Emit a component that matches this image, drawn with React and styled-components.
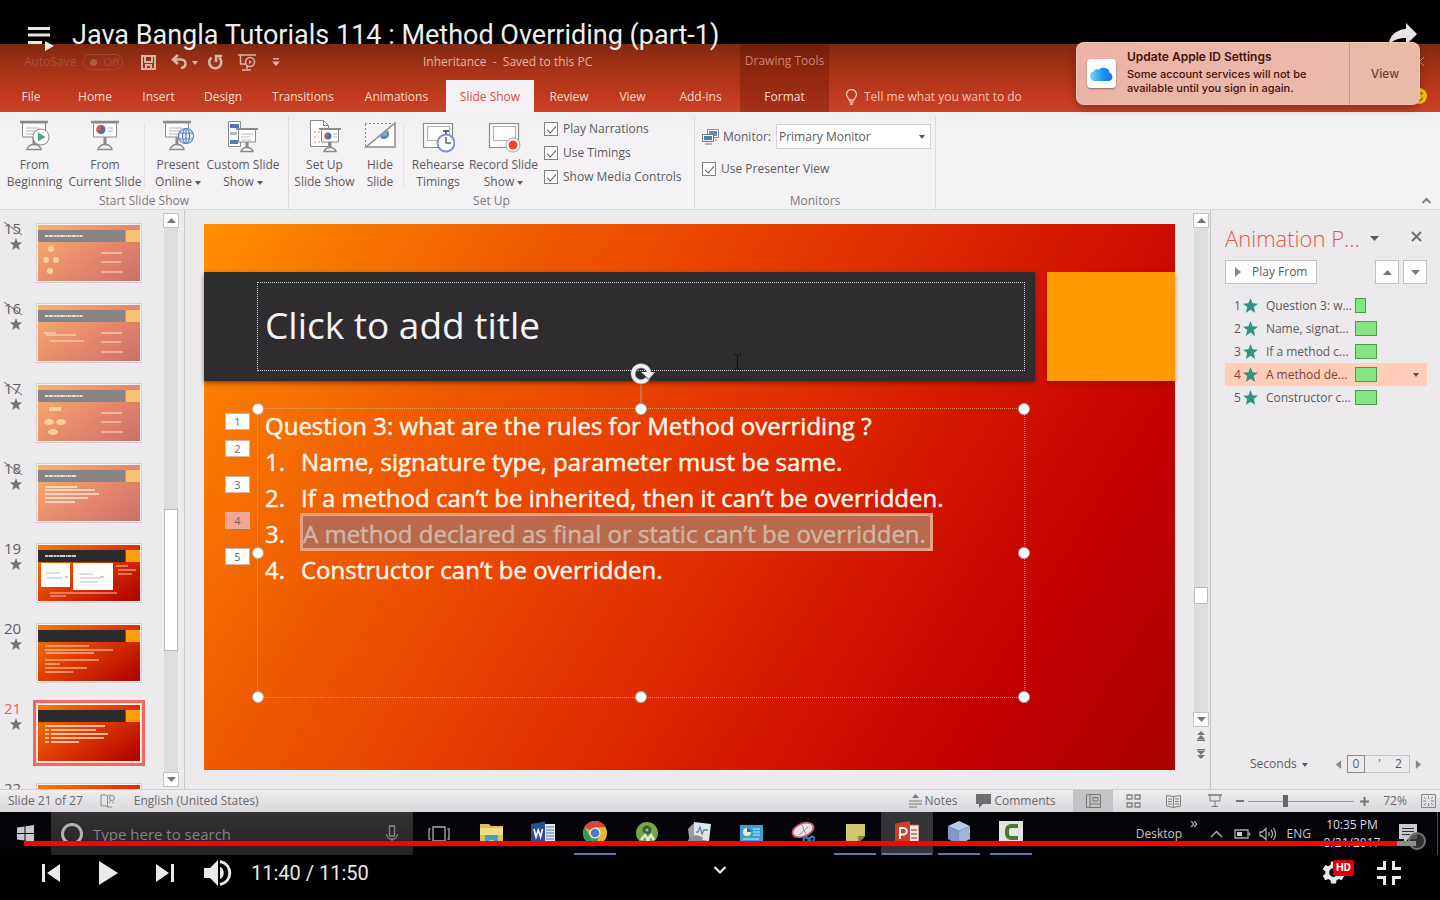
import React from "react";
import styled, { createGlobalStyle, css } from "styled-components";

const Global = createGlobalStyle`
  * { box-sizing: border-box; }
  html, body { margin: 0; background: #000; }
  button, input, select { font: inherit; color: inherit; margin: 0; }
  button { background: none; border: 0; padding: 0; cursor: pointer; }
  svg { display: block; flex: none; }
`;

const ui = `"Open Sans", "Noto Sans", sans-serif`;

/* ---------- player shell ---------- */
const Player = styled.div`
  position: relative;
  min-height: 100vh;
  display: flex;
  flex-direction: column;
  overflow: hidden;
  padding-top: 44px;
  background: #000;
  font-family: Roboto, sans-serif;
`;
const PlayerHeader = styled.header`
  position: absolute;
  z-index: 3;
  top: 0;
  left: 0;
  right: 0;
  height: 70px;
  padding: 0 22px 0 26px;
  display: flex;
  align-items: center;
  color: #eee;
`;
const VideoTitle = styled.h1`
  flex: 1;
  margin: 0 0 0 16px;
  font-size: 27px;
  line-height: 32px;
  font-weight: 400;
  white-space: nowrap;
`;
const Video = styled.main`
  flex: 1;
  display: flex;
  flex-direction: column;
  min-height: 0;
  font-family: ${ui};
  font-size: 12px;
  line-height: 16px;
  color: #5c5a5c;
`;
const SeekBar = styled.input`
  position: absolute;
  z-index: 4;
  left: 24px;
  right: 24px;
  bottom: 54px;
  width: calc(100% - 48px);
  height: 5px;
  appearance: none;
  background: linear-gradient(to right, #f00 98.6%, #8d8d8d 98.6%);
  &::-webkit-slider-thumb { appearance: none; width: 1px; height: 5px; background: transparent; }
`;
const Controls = styled.footer`
  display: grid;
  grid-template-columns: 1fr auto 1fr;
  align-items: center;
  height: 45px;
  padding: 0 38px 10px 38px;
  color: #eaeaea;
`;
const ControlSide = styled.div`
  display: flex;
  align-items: center;
  gap: ${(p) => p.$gap}px;
  justify-content: ${(p) => (p.$end ? "flex-end" : "flex-start")};
`;
const VolumeGroup = styled.div`
  display: flex;
  align-items: center;
  gap: 19px;
  margin-left: -8px;
`;
const Time = styled.span`
  font-size: 20px;
  line-height: 24px;
`;
const Settings = styled.button`
  position: relative;
`;
const HdBadge = styled.span`
  position: absolute;
  top: 0;
  left: 12px;
  padding: 0 3px;
  border-radius: 2px;
  background: #e00000;
  color: #fff;
  font-weight: 700;
  font-size: 11px;
  line-height: 16px;
`;

/* ---------- notification ---------- */
const Toast = styled.aside`
  position: absolute;
  z-index: 5;
  top: 42px;
  right: 20px;
  width: 344px;
  height: 63px;
  display: flex;
  align-items: stretch;
  border-radius: 8px;
  background: linear-gradient(100deg, #ebb3a6, #eab9aa 70%, #e8bba6);
  box-shadow: 0 3px 10px rgba(0, 0, 0, 0.3), inset 0 0 0 1px rgba(255, 255, 255, 0.2);
  color: #431109;
  font: 500 11px/14px Inter, sans-serif;
`;
const ToastIcon = styled.div`
  align-self: center;
  margin: 0 11px;
  width: 29px;
  height: 29px;
  border-radius: 4px;
  background: #fff;
  display: grid;
  place-items: center;
  box-shadow: 0 1px 2px rgba(0, 0, 0, 0.4);
`;
const ToastText = styled.div`
  flex: 1;
  padding-top: 7px;
  white-space: nowrap;
`;
const ToastTitle = styled.div`
  font-weight: 600;
  font-size: 12px;
  line-height: 16px;
  margin-bottom: 2px;
`;
const ToastAction = styled.button`
  width: 71px;
  border-left: 1px solid #cf958a;
  color: #74402f;
  font-size: 12px;
`;

/* ---------- window header ---------- */
const WindowHeader = styled.div`
  background: linear-gradient(#7f2812, #a93317 40%, #c03a1d 75%, #cb4326);
  color: #f6dcd2;
  white-space: nowrap;
`;
const TitleBar = styled.div`
  display: flex;
  height: 36px;
  align-items: center;
`;
const QuickAccess = styled.div`
  width: 423px;
  padding-left: 24px;
  display: flex;
  align-items: center;
  color: #d9b5a8;
`;
const QuickButton = styled.button`
  margin-right: ${(p) => p.$after || 0}px;
`;
const AutoSave = styled.span`
  width: 116px;
  display: flex;
  align-items: center;
  gap: 7px;
  color: #a55440;
`;
const Toggle = styled.span`
  display: flex;
  align-items: center;
  gap: 6px;
  height: 16px;
  width: 40px;
  padding-left: 6px;
  border: 1px solid #a04a35;
  border-radius: 8px;
  font-size: 11px;
  line-height: 14px;
  &::before { content: ""; width: 7px; height: 7px; border-radius: 50%; background: #ad5c49; }
`;
const DocTitle = styled.span`
  width: 317px;
  color: #e2b5a6;
  white-space: pre;
`;
const ToolContext = styled.span`
  width: 89px;
  height: 36px;
  line-height: 34px;
  text-align: center;
  background: rgba(80, 10, 0, 0.3);
  color: #c98571;
`;
const Tabs = styled.nav`
  display: flex;
  height: 32px;
  padding-left: 2px;
`;
const Tab = styled.button`
  width: ${(p) => p.$w}px;
  line-height: 34px;
  text-align: center;
  ${(p) => p.$active && css`background: #f3f1f3; color: #dd4f47;`}
  ${(p) => p.$context && css`background: rgba(80, 10, 0, 0.3);`}
`;
const TellMe = styled.button`
  display: flex;
  align-items: center;
  gap: 6px;
  margin-left: 16px;
  padding-top: 2px;
  color: #efc3b3;
`;
const HeaderEnd = styled.div`
  margin-left: auto;
  padding-right: 13px;
  display: flex;
  align-items: center;
`;

/* ---------- ribbon ---------- */
const Ribbon = styled.section`
  display: flex;
  height: 98px;
  padding: 5px 0 0;
  background: linear-gradient(#efeef1, #f4f2f4 30%);
  border-bottom: 1px solid #d9d7d9;
`;
const Group = styled.div`
  display: flex;
  flex-direction: column;
  justify-content: space-between;
  width: ${(p) => p.$w}px;
  border-right: 1px solid #dad8da;
`;
const GroupBody = styled.div`
  display: flex;
`;
const GroupLabel = styled.div`
  text-align: center;
  color: #7b797b;
`;
const BigButton = styled.button`
  display: flex;
  flex-direction: column;
  align-items: center;
  width: ${(p) => p.$w}px;
  padding-top: 3px;
  line-height: 17px;
  white-space: nowrap;
  & > svg { margin-bottom: 2px; }
`;
const Rule = styled.i`
  width: 1px;
  height: 66px;
  margin: 6px 3px 0;
  background: #e3e1e3;
`;
const Caret = styled.i`
  display: inline-block;
  vertical-align: middle;
  margin-left: ${(p) => p.$gap ?? 3}px;
  border: 3px solid transparent;
  border-top: 4px solid currentColor;
  border-bottom: 0;
`;
const Checks = styled.div`
  display: flex;
  flex-direction: column;
  gap: 8px;
  margin-left: 6px;
  padding-top: 4px;
`;
const CheckLabel = styled.label`
  display: flex;
  align-items: center;
  gap: 5px;
  white-space: nowrap;
`;
const CheckBox = styled.input`
  appearance: none;
  width: 14px;
  height: 14px;
  border: 1px solid #858385;
  background: #fbfafb;
  display: grid;
  place-items: center;
  &:checked::after {
    content: "";
    width: 4px;
    height: 8px;
    margin-bottom: 2px;
    border: solid #5d5b5d;
    border-width: 0 1px 1px 0;
    transform: rotate(40deg);
  }
`;
const MonitorBox = styled.div`
  display: flex;
  flex-direction: column;
  gap: 12px;
  padding: 7px 0 0 7px;
`;
const MonitorRow = styled.label`
  display: flex;
  align-items: center;
  gap: 4px;
`;
const SelectWrap = styled.span`
  display: flex;
  align-items: center;
  width: 155px;
  height: 25px;
  margin-left: 1px;
  padding-right: 5px;
  background: #fff;
  border: 1px solid #d2d0d2;
`;
const Select = styled.select`
  appearance: none;
  flex: 1;
  border: 0;
  padding: 0 2px;
  background: none;
`;
const CollapseRibbon = styled.button`
  align-self: flex-end;
  margin: 0 8px 2px auto;
`;

/* ---------- workspace ---------- */
const Workspace = styled.section`
  flex: 1 1 0;
  min-height: 560px;
  display: flex;
  background: #eceaec;
  border-bottom: 1px solid #cfcdcf;
`;
const Panel = styled.aside`
  position: relative;
  width: 185px;
  display: flex;
  justify-content: space-between;
  padding-right: 4px;
  border-right: 1px solid #c9c7c9;
  overflow: hidden;
`;
const ThumbList = styled.ol`
  list-style: none;
  margin: 0;
  padding: 13px 0 0;
  height: 0;
`;
const ThumbItem = styled.li`
  display: flex;
  height: 80px;
  padding-left: 4px;
  color: ${(p) => (p.$active ? "#e0655c" : "#605e60")};
`;
const ThumbMeta = styled.div`
  position: relative;
  width: 32px;
  font-size: 15px;
  line-height: 10px;
  ${(p) => p.$off && css`
    &::after {
      content: "";
      position: absolute;
      left: -2px;
      top: 5px;
      width: 22px;
      height: 1px;
      background: #777;
      transform: rotate(36deg);
    }
  `}
  & > svg { margin: 5px 0 0 6px; }
`;
const ThumbFrame = styled.div`
  height: 60px;
  border: 1px solid #d3d0d3;
  padding: 1px;
  background: #f8f3f1;
  ${(p) => p.$active && css`outline: 3px solid #f0695f; border-color: #f7ddd0;`}
`;
const Scroll = styled.div`
  display: flex;
  flex-direction: column;
  align-items: center;
  width: 18px;
  padding: 3px 0 ${(p) => p.$bottom || 0}px;
  color: #777;
`;
const ScrollTrack = styled.div`
  flex: 1;
  width: 14px;
  display: flex;
  flex-direction: column;
  background: #dedddd;
`;
const ScrollThumb = styled.div`
  height: ${(p) => p.$h}px;
  margin-top: ${(p) => p.$top}px;
  background: #fff;
  border: 1px solid #bbb9bb;
`;
const ArrowButton = styled.button`
  width: ${(p) => p.$size || 16}px;
  height: ${(p) => p.$size || 15}px;
  flex: none;
  display: grid;
  place-items: center;
  background: #fff;
  border: 1px solid #c3c1c3;
  color: #777;
`;
const JumpButton = styled.button`
  height: 18px;
`;
const Stage = styled.div`
  flex: 1;
  min-width: 0;
  display: flex;
  align-items: flex-start;
  padding: 14px 17px 0 19px;
`;

/* ---------- slide ---------- */
const Slide = styled.article`
  flex: 1;
  height: 546px;
  padding-top: 48px;
  background: linear-gradient(122deg, #ff8f00 0%, #f67200 14%, #ee5700 28%, #e63c00 45%, #da2300 60%, #cc0c00 74%, #c00000 85%, #a80000 100%);
  color: #fff4ea;
`;
const TitleBand = styled.div`
  display: flex;
  gap: 12px;
  height: 109px;
`;
const TitleBlock = styled.div`
  flex: 1;
  display: flex;
  padding: 10px 10px 10px 53px;
  background: #2f2c30;
  box-shadow: 0 2px 4px rgba(60, 0, 0, 0.5);
`;
const Accent = styled.div`
  width: 128px;
  background: #ff9b00;
  box-shadow: 0 2px 4px rgba(90, 20, 0, 0.5);
`;
const TitlePlaceholder = styled.h2`
  flex: 1;
  margin: 0;
  padding: 0 7px 4px;
  display: flex;
  align-items: center;
  border: 1px dotted #d5d3d5;
  font-weight: 400;
  font-size: 37px;
  line-height: 44px;
  color: #f5f3f4;
  white-space: nowrap;
`;
const Body = styled.div`
  position: relative;
  height: 290px;
  margin: 27px 150px 0 53px;
  border: 1px dotted rgba(235, 185, 130, 0.7);
  font-size: 24px;
  line-height: 34px;
  white-space: nowrap;
  -webkit-text-stroke: 0.5px currentColor;
`;
const Line = styled.div`
  position: relative;
  display: flex;
  height: 36px;
  padding-left: 7px;
`;
const Num = styled.span`
  width: 36px;
`;
const Chosen = styled.span`
  height: 38px;
  width: 633px;
  margin: -4px 0 0 -1px;
  border: 3px solid #e9a08a;
  background: #b96a4b;
  color: #cdb5a8;
  line-height: 36px;
`;
const Tag = styled.span`
  position: absolute;
  left: -33px;
  top: ${(p) => p.$top}px;
  width: 25px;
  height: 17px;
  border: 1px solid #d8b2a2;
  background: ${(p) => (p.$on ? "#f8a393" : "#fff")};
  color: #666;
  font-size: 11px;
  line-height: 15px;
  text-align: center;
  -webkit-text-stroke: 0;
`;
const Handle = styled.i`
  position: absolute;
  left: ${(p) => p.$x}%;
  top: ${(p) => p.$y}%;
  width: 12px;
  height: 12px;
  margin: -6px;
  border-radius: 50%;
  background: #fff;
  border: 1px solid #aaa;
`;
const Rotate = styled.div`
  position: absolute;
  left: 50%;
  top: -46px;
  margin-left: -12px;
`;
const TextCursor = styled.div`
  position: absolute;
  left: 62%;
  top: -56px;
`;

/* ---------- animation pane ---------- */
const Pane = styled.aside`
  width: 230px;
  display: flex;
  flex-direction: column;
  padding: 12px 13px 16px 14px;
  border-left: 1px solid #c6c4c6;
`;
const PaneHead = styled.div`
  display: flex;
  align-items: center;
  gap: 10px;
  height: 32px;
  & > button:last-child { margin-left: auto; }
`;
const PaneTitle = styled.h2`
  margin: 0;
  font-weight: 300;
  font-size: 22px;
  line-height: 32px;
  color: #e2574e;
  white-space: nowrap;
`;
const PaneTools = styled.div`
  display: flex;
  gap: 4px;
  margin: 6px 0 10px;
`;
const PlayFrom = styled.button`
  display: flex;
  align-items: center;
  gap: 10px;
  width: 92px;
  height: 24px;
  margin-right: auto;
  padding-left: 8px;
  background: #fff;
  border: 1px solid #c3c1c3;
`;
const Effects = styled.ol`
  list-style: none;
  margin: 0;
  padding: 0;
`;
const Effect = styled.li`
  display: flex;
  align-items: center;
  height: 23px;
  padding: 0 8px 0 9px;
  ${(p) => p.$on && css`background: #ffcdb8; color: #7a4138;`}
  & > svg { margin: 0 8px 0 2px; }
  & > i { margin-left: auto; }
`;
const EffectName = styled.span`
  width: 89px;
  white-space: nowrap;
`;
const Duration = styled.span`
  width: ${(p) => p.$w}px;
  height: 15px;
  background: #86e486;
  border: 1px solid #4f9a4c;
`;
const Timeline = styled.div`
  display: flex;
  align-items: center;
  justify-content: space-between;
  margin-top: auto;
  padding: 0 5px 0 25px;
`;
const Range = styled.div`
  display: flex;
  align-items: center;
  gap: 5px;
`;
const Scale = styled.div`
  display: flex;
  width: 63px;
  height: 18px;
  border: 1px solid #c5c3c5;
  line-height: 16px;
  justify-content: space-between;
  padding-right: 7px;
`;
const ScaleNow = styled.span`
  width: 18px;
  height: 18px;
  margin: -1px;
  border: 1px solid #8f8d8f;
  text-align: center;
`;

/* ---------- status bar ---------- */
const StatusBar = styled.footer`
  position: relative;
  display: flex;
  align-items: center;
  height: 22px;
  padding: 0 4px 0 8px;
  background: linear-gradient(#efedef, #d9d7d9);
  white-space: nowrap;
  color: #6a686a;
`;
const StatusButton = styled.button`
  display: flex;
  align-items: center;
  justify-content: center;
  gap: 3px;
  height: 22px;
  width: ${(p) => p.$w}px;
  background: ${(p) => (p.$on ? "#c4c2c4" : "none")};
`;
const StatusEnd = styled.div`
  margin-left: auto;
  display: flex;
  align-items: center;
`;
const ZoomRange = styled.input`
  appearance: none;
  width: 106px;
  height: 14px;
  margin: 0 6px 0 4px;
  background: linear-gradient(#9a989a, #9a989a) center / 100% 1px no-repeat;
  &::-webkit-slider-thumb { appearance: none; width: 5px; height: 12px; background: #666; }
`;

/* ---------- task bar ---------- */
const TaskBar = styled.footer`
  display: flex;
  height: 43px;
  background: #040308;
  color: #c6c5c8;
  white-space: nowrap;
`;
const Start = styled.button`
  width: 51px;
  display: grid;
  place-items: center;
`;
const Search = styled.label`
  display: flex;
  align-items: center;
  gap: 9px;
  width: 362px;
  padding: 0 14px 0 9px;
  background: linear-gradient(#333133, #252425);
`;
const SearchInput = styled.input`
  flex: 1;
  min-width: 0;
  padding: 0;
  border: 0;
  background: none;
  font-size: 15px;
  line-height: 20px;
  &::placeholder { color: #858385; opacity: 1; }
`;
const Task = styled.button`
  width: 52px;
  display: grid;
  place-items: center;
  background: ${(p) => (p.$on ? "#343438" : "none")};
  border-bottom: 2px solid transparent;
  ${(p) => p.$open && css`
    background-image: linear-gradient(#4e80a8, #4e80a8);
    background-size: ${p.$on ? 50 : 42}px 2px;
    background-position: center bottom;
    background-origin: border-box;
    background-clip: border-box;
    background-repeat: no-repeat;
  `}
`;
const Tray = styled.div`
  margin-left: auto;
  display: flex;
  align-items: center;
  padding-right: 2px;
`;
const TrayText = styled.span`
  margin-right: ${(p) => p.$after}px;
`;
const Chevrons = styled.span`
  align-self: flex-start;
  font-size: 15px;
  line-height: 20px;
  margin-right: 12px;
`;
const TrayIcon = styled.span`
  margin-right: ${(p) => p.$after}px;
`;
const Clock = styled.time`
  width: 66px;
  text-align: center;
  line-height: 18px;
  color: #dddce0;
`;
const Notices = styled.span`
  position: relative;
  margin: 0 20px 0 14px;
`;
const NoticeCount = styled.i`
  position: absolute;
  top: 8px;
  left: 9px;
  width: 18px;
  height: 18px;
  border-radius: 50%;
  border: 2px solid #727272;
  background: rgba(60, 60, 60, 0.8);
`;
const ShowDesktop = styled.i`
  align-self: stretch;
  width: 1px;
  background: #4a4a4d;
`;

/* ---------- drawings ---------- */
const Star = ({ c = "#2f9484", s = 15 }) => (
  <svg width={s} height={s} viewBox="0 0 16 16"><path fill={c} d="M8 0l2.200 5.600 5.800.4-4.500 3.700L13 16l-5-3.400L3 16l1.500-6.300L0 6l5.800-.4z" /></svg>
);
const Up = () => <svg width="9" height="5" viewBox="0 0 9 5"><path fill="currentColor" d="M4.500 0L9 5H0z" /></svg>;
const Down = () => <svg width="9" height="5" viewBox="0 0 9 5"><path fill="currentColor" d="M0 0h9L4.500 5z" /></svg>;
const Tri = ({ left, s = 8 }) => (
  <svg width={s} height={s + 2} viewBox="0 0 8 10"><path fill="#8a888a" d={left ? "M7 0v10L1 5z" : "M1 0l6 5-6 5z"} /></svg>
);

const Screen = ({ x = 0, y = 0, w = 28, pie }) => (
  <g transform={`translate(${x} ${y})`} fill="none" stroke="#8b898b">
    <path strokeWidth="2.500" d={`M0 2h${w}`} />
    <path fill="#fdfdfd" d={`M2.500 3h${w - 5}v14h-${w - 5}z`} />
    {pie ? (
      <g stroke="none"><circle cx="10" cy="9.500" r="4.500" fill="#3f72bd" /><path fill="#dd5a35" d="M10 9.500V5a4.500 4.500 0 0 0-3 8z" /></g>
    ) : <path stroke="#b5b3b5" d={`M6 8h${w - 15}M6 11h${w - 16}M6 14h${w - 18}`} />}
    {pie && <path stroke="#b5b3b5" d="M17 8h5M17 11h5" />}
    <path strokeWidth="3" d={`M${w / 2} 17v8`} />
    <path strokeWidth="1.500" d={`M${w / 2 - 7} 29.500c1-4 4-5 7-5s6 1 7 5z`} fill="#f4f4f4" />
  </g>
);
const Icon = ({ children }) => <svg width="34" height="34" viewBox="0 0 34 34">{children}</svg>;
const IconBeginning = () => (
  <Icon><Screen x={2} y={0} /><circle cx="23" cy="17" r="8" fill="#fff" stroke="#8b898b" /><path d="M20 12.500l7.500 4.500-7.500 4.500z" fill="#55a08a" /></Icon>
);
const IconCurrent = () => <Icon><Screen x={3} y={0} pie /></Icon>;
const IconOnline = () => (
  <Icon><Screen x={2} y={0} /><g fill="#eef4fb" stroke="#5b84c4" strokeWidth="1.200"><circle cx="25" cy="16" r="7.500" /><ellipse cx="25" cy="16" rx="3.500" ry="7.500" fill="none" /><path d="M18 13h14M18 19h14M25 8.500v15" /></g></Icon>
);
const IconCustom = () => (
  <Icon><path fill="#fff" stroke="#8b898b" d="M2.500 1.500h12v25h-12z" /><path fill="#4b74bd" d="M4 4h9v4H4z" /><path fill="#a7bdb4" d="M4 12h7v3H4z" /><path fill="#5180b8" d="M4 20h8v4H4z" />
    <g fill="none" stroke="#8b898b"><path strokeWidth="2" d="M10 9h22" /><path fill="#fff" d="M12.500 10v12h17V10" /><path stroke="#bbb" d="M15 14h12M15 17h9M15 20h10" /><path strokeWidth="3" d="M21 22v6" /><path fill="#f4f4f4" strokeWidth="1.500" d="M15 31.500c1-3 3-4 6-4s5 1 6 4z" /></g></Icon>
);
const IconSetup = () => (
  <Icon><path fill="#fff" stroke="#8b898b" d="M2.500.5h13l5 5v21h-18z" /><path fill="none" stroke="#8b898b" d="M15.500.5v5h5" /><path stroke="#c98d80" strokeDasharray="2 2" d="M6 12h7M6 17h5M6 22h6" />
    <g fill="none" stroke="#8b898b"><path strokeWidth="2" d="M11 9h22" /><path fill="#fff" d="M13.500 10v12h17V10" /><path strokeWidth="3" d="M22 22v6" /><path fill="#f4f4f4" strokeWidth="1.500" d="M16 31.500c1-3 3-4 6-4s5 1 6 4z" /></g>
    <circle cx="20" cy="16" r="3.500" fill="#3f72bd" /><path fill="#dd5a35" d="M20 16v-3.500a3.500 3.500 0 0 0-2.500 6z" /><path stroke="#bbb" d="M25 14h4M25 17h4" /></Icon>
);
const IconHide = () => (
  <Icon><path fill="none" stroke="#8b898b" strokeDasharray="2 2" d="M2 3.500h26M2.500 4v22" /><path fill="#fdfdfd" stroke="#8b898b" strokeWidth="1.500" d="M32 3v24H3z" /><path fill="#4b7fc2" d="M24 10a5 5 0 1 1-7 7z" /><path fill="#9ab" d="M24 10v5l-5 2z" /></Icon>
);
const Slideshow = () => (
  <g fill="#fdfdfd" stroke="#8b898b" strokeWidth="1.200"><path d="M2.500 3.500h29v24h-29z" /><path stroke="#b3b1b3" d="M6.500 6.500h22v14h-22z" /></g>
);
const IconRehearse = () => (
  <Icon><Slideshow /><path fill="#666" d="M22 10h6v2h-2v2h-2v-2h-2z" /><circle cx="25" cy="23" r="8.500" fill="#fff" stroke="#7590c8" strokeWidth="1.800" /><path fill="none" stroke="#666" strokeWidth="1.500" d="M25 17v6h5" /></Icon>
);
const IconRecord = () => <Icon><Slideshow /><circle cx="26" cy="25" r="7" fill="#f8f6f7" stroke="#aaa" /><circle cx="26" cy="25" r="4.500" fill="#e24b38" /></Icon>;

const FilmThumb = ({ kind, muted, id }) => (
  <svg width="102" height="56" viewBox="0 0 102 56" opacity={muted ? 0.55 : 1}>
    <defs>
      <linearGradient id={`g${id}`} x1="0" y1="0.1" x2="1" y2="0.9">
        <stop offset="0" stopColor="#f57800" /><stop offset=".45" stopColor="#e03c00" /><stop offset="1" stopColor="#b00500" />
      </linearGradient>
    </defs>
    <path fill={`url(#g${id})`} d="M0 0h102v56H0z" />
    <path fill="#2c2b2f" d="M0 5h87v12H0z" /><path fill="#ff9d0a" d="M88 5h14v12H88z" />
    {kind !== "text" && kind !== "rules" && <path stroke="#fff" strokeWidth="1.600" strokeDasharray="3 .5 5 .6 2 .4" d={kind === "pics" || kind === "list" ? "M7 11h31" : "M7 11h38"} />}
    {(kind === "tree" || kind === "plain" || kind === "tree2") && (
      <g stroke="#ffd8b0" strokeWidth="1"><path d="M63 28h21M63 37h20M63 47h22" /></g>
    )}
    {kind === "tree" && <g fill="#ffb84a"><circle cx="13" cy="24" r="3" /><circle cx="8" cy="35" r="3" /><circle cx="18" cy="35" r="3" /><circle cx="12" cy="46" r="3" /></g>}
    {kind === "tree2" && <g fill="#ffb84a"><path d="M11 22h12v4H11z" /><ellipse cx="11" cy="37" rx="5" ry="3" /><ellipse cx="23" cy="37" rx="5" ry="3" /><ellipse cx="15" cy="47" rx="5" ry="3" /></g>}
    {kind === "plain" && <path stroke="#ffd8b0" d="M6 28h12M8 30h30M12 36h34" />}
    {kind === "list" && <path stroke="#ffe6d0" strokeWidth="1.500" d="M7 22h32M7 25h50M7 29h54M7 33h43M7 37h30" />}
    {kind === "pics" && <g><path fill="#fff" d="M3 18h29v24H3zM35 18h40v27H35z" /><path stroke="#b9b9c4" d="M8 28h14M9 33h16M41 29h14M42 33h20M42 37h18" /><path stroke="#dcb" strokeWidth="2" d="M27 32h3M62 32h4" /><path stroke="#ffc6b0" d="M78 21h12M80 25h18M80 29h14M12 48h67M12 51h16" /></g>}
    {kind === "text" && <path stroke="#ffe6d0" strokeWidth="1.200" d="M7 21h44M7 25h68M8 28h48M7 35h54M7 39h15M7 43h42M7 47h28" />}
    {kind === "rules" && <path stroke="#ffe6d0" strokeWidth="1.300" d="M7 21h60M7 25h4M13 25h45M7 29h4M13 29h57M7 33h4M13 33h53M7 37h4M13 37h28" />}
  </svg>
);

const thumbs = [
  { n: 15, kind: "tree", off: true }, { n: 16, kind: "plain", off: true }, { n: 17, kind: "tree2", off: true },
  { n: 18, kind: "list", off: true }, { n: 19, kind: "pics" }, { n: 20, kind: "text" },
  { n: 21, kind: "rules", active: true }, { n: 22, kind: "text" },
];
const tabs = [["File", 58], ["Home", 70], ["Insert", 57], ["Design", 72], ["Transitions", 88], ["Animations", 99], ["Slide Show", 88], ["Review", 70], ["View", 57], ["Add-ins", 79], ["Format", 89]];
const rules = [
  { n: "1.", t: "Name, signature type, parameter must be same." },
  { n: "2.", t: "If a method can’t be inherited, then it can’t be overridden." },
  { n: "3.", t: "A method declared as final or static can’t be overridden.", on: true },
  { n: "4.", t: "Constructor can’t be overridden." },
];
const effects = [["Question 3: w...", 11], ["Name, signat...", 22], ["If a method c...", 22], ["A method de...", 22], ["Constructor c...", 22]];

const taskIcons = [
  { name: "Task View", d: <g fill="none" stroke="#aaa" strokeWidth="1.300"><path d="M6 6h12v14H6zM3.500 8H2v10h1.500M20.500 8H22v10h-1.500" /></g> },
  { name: "File Explorer", d: <g><path fill="#dcc05c" d="M1 3h9l2 2h12v18H1z" /><path fill="#f2dc85" d="M1 7h23v7H1z" /><path fill="#3aa5c8" d="M6 14h13v9h-4v-4h-5v4H6z" /></g> },
  { name: "Word", d: <g><path fill="#dfe5f2" d="M12 3h12v18H12z" /><path stroke="#5872ab" d="M15 6h8M15 9h8M15 12h8M15 15h8M15 18h8" /><path fill="#2c4d93" d="M0 3l14-2.500v23L0 21z" /><path fill="none" stroke="#fff" strokeWidth="1.600" d="M3 8l2 8 2.200-7 2.300 7 2-8" /></g> },
  { name: "Chrome", open: true, d: <g><circle cx="12" cy="12" r="12" fill="#e8b931" /><path fill="#d8453a" d="M12 12L1.500 6.200A12 12 0 0 1 22.500 6.200H12z" /><path fill="#2f9a55" d="M1.500 6.200L7 15l5 9A12 12 0 0 1 1.500 6.200z" /><path fill="#2f9a55" d="M7 14l5 10 4-8z" /><circle cx="12" cy="12" r="5.600" fill="#eee" /><circle cx="12" cy="12" r="4.300" fill="#4a79d8" /></g> },
  { name: "Android Studio", d: <g><circle cx="12" cy="12" r="11" fill="#76a845" /><circle cx="12" cy="9" r="4.500" fill="#40603c" /><circle cx="12" cy="9" r="1.500" fill="#9fc47e" /><path fill="none" stroke="#dfe8d8" strokeWidth="2.500" d="M6 19l4-5 4 6M12 20l4-6 3 5" /></g> },
  { name: "Performance", d: <g><path fill="#9a9fa3" d="M1 8l6-6 4 16-8 6z" /><path fill="#dfe4e8" d="M7 1l17 2-2 17-15-1z" /><path fill="#8a9095" d="M1 19c5-6 10-6 15-2l-3 5H1z" /><path fill="none" stroke="#5f87a8" strokeWidth="1.300" d="M9 11h2l2-5 2 7 2-4h4" /></g> },
  { name: "Control Panel", d: <g><path fill="#37a0d4" d="M1 4h23v17H1z" /><circle cx="8" cy="11" r="4" fill="#f0e9c8" /><path fill="#1f6fae" d="M8 11V7a4 4 0 0 1 4 4z" /><path stroke="#d5edfa" d="M14 8h7M14 11h7M14 14h7M4 18h16" /></g> },
  { name: "Snipping Tool", d: <g><ellipse cx="12" cy="9" rx="11" ry="6.500" fill="#e8e4e8" stroke="#d44f68" strokeWidth="1.800" transform="rotate(-22 12 9)" /><path stroke="#7a9a9a" d="M11 4l5 12M17 6L8 14" /><circle cx="15" cy="19" r="2.500" fill="none" stroke="#267fb0" strokeWidth="2" /><circle cx="21" cy="18" r="2.500" fill="none" stroke="#267fb0" strokeWidth="2" /></g> },
  { name: "Sticky Notes", open: true, d: <g><path fill="#cfc66d" d="M3 3h19v12l-7 7H3z" /><path fill="#8a8148" d="M15 15h7l-7 7z" /></g> },
  { name: "PowerPoint", open: true, on: true, d: <g><path fill="#eee" stroke="#c9533b" d="M12 4h12v17H12z" /><path stroke="#cf5a42" strokeWidth="1.500" d="M16 9h6M16 13h6M16 17h6" /><path fill="#cf3d26" d="M0 2.500L15 0v24L0 21z" /><path fill="none" stroke="#fff" strokeWidth="2" d="M5 18V7h3.500a3 3 0 0 1 0 6.500H5" /></g> },
  { name: "VirtualBox", open: true, d: <g><path fill="#b9cbe6" d="M12 0l11 5-11 5L1 5z" /><path fill="#8199c4" d="M1 5l11 5v14L1 18z" /><path fill="#a0b4d8" d="M23 5l-11 5v14l11-6z" /></g> },
  { name: "Camtasia", open: true, d: <g><path fill="#e3e4e0" d="M-1-1h26v26H-1z" /><path fill="none" stroke="#4a7a34" strokeWidth="4" d="M19 5H12a4 4 0 0 0-4 4v4a4 4 0 0 0 4 4h7" /></g> },
];

export default function App() {
  return (
    <Player>
      <Global />
      <PlayerHeader>
        <button aria-label="Playlist">
          <svg width="30" height="34" viewBox="0 0 30 34" fill="#e6e6e6"><path d="M2 9h22v3H2zM2 15.500h22v3H2zM2 23h14v3H2zM19 23l9 5-9 5z" /></svg>
        </button>
        <VideoTitle>Java Bangla Tutorials 114 : Method Overriding (part-1)</VideoTitle>
        <button aria-label="Share">
          <svg width="30" height="26" viewBox="0 0 30 26"><path fill="#e8e8e8" d="M18 1l11 11-11 11v-7C10 16 4 18 0 25 1 14 7 8 18 7z" /></svg>
        </button>
      </PlayerHeader>

      <Video>
        <WindowHeader>
          <TitleBar>
            <QuickAccess>
              <AutoSave>AutoSave <Toggle>Off</Toggle></AutoSave>
              <QuickButton $after={14} aria-label="Save">
                <svg width="17" height="17" viewBox="0 0 17 17" fill="none" stroke="currentColor" strokeWidth="2"><path d="M2 2h13v13H2zM4 8h9M5 2v5M12 2v5M6 15v-4h5v4" /></svg>
              </QuickButton>
              <QuickButton aria-label="Undo">
                <svg width="17" height="16" viewBox="0 0 17 16" fill="none" stroke="currentColor" strokeWidth="2.600"><path d="M7 1L2 5.500 7 10M2 5.500h8c6 0 6 8 0 8.500" /></svg>
              </QuickButton>
              <QuickButton $after={9} aria-label="Undo options"><Caret $gap={4} /></QuickButton>
              <QuickButton $after={14} aria-label="Repeat">
                <svg width="17" height="17" viewBox="0 0 17 17" fill="none" stroke="currentColor" strokeWidth="2.600"><path d="M4.500 3.500A6 6 0 1 0 12 3.500M9 8V2h6" /></svg>
              </QuickButton>
              <QuickButton $after={16} aria-label="Start from beginning">
                <svg width="18" height="18" viewBox="0 0 18 18" fill="none" stroke="currentColor" strokeWidth="1.500"><path d="M0 2h18M2.500 2v9H8M9 13v3M4 17h9" /><circle cx="12" cy="9" r="4.500" /><path fill="currentColor" stroke="none" d="M11 7l3 2-3 2z" /></svg>
              </QuickButton>
              <QuickButton aria-label="Customize">
                <svg width="8" height="8" viewBox="0 0 8 8" fill="currentColor"><path d="M1 0h6v1.500H1zM0 3.500h8L4 8z" /></svg>
              </QuickButton>
            </QuickAccess>
            <DocTitle>{"Inheritance  -  Saved to this PC"}</DocTitle>
            <ToolContext>Drawing Tools</ToolContext>
            <HeaderEnd><svg width="14" height="14" viewBox="0 0 14 14" stroke="#d79a8a"><path d="M2 2l9 9M11 2l-9 9" /></svg></HeaderEnd>
          </TitleBar>
          <Tabs>
            {tabs.map(([t, w]) => (
              <Tab key={t} $w={w} $active={t === "Slide Show"} $context={t === "Format"}>{t}</Tab>
            ))}
            <TellMe>
              <svg width="13" height="16" viewBox="0 0 13 16" fill="none" stroke="currentColor" strokeWidth="1.300"><path d="M4 11c0-2-2.500-3-2.500-5.500a5 5 0 0 1 10 0C11.500 8 9 9 9 11zM4.500 13h4M5 15h3" /></svg>
              Tell me what you want to do
            </TellMe>
            <HeaderEnd>
              <svg width="16" height="16" viewBox="0 0 16 16"><circle cx="8" cy="8" r="8" fill="#f3c80d" /><circle cx="10.500" cy="5.500" r="1" fill="#6b5200" /><path d="M4 10c2 3 6 3 8 0" stroke="#6b5200" fill="none" /></svg>
            </HeaderEnd>
          </Tabs>
        </WindowHeader>

        <Ribbon>
          <Group $w={289}>
            <GroupBody>
              <BigButton $w={69}><IconBeginning /><span>From</span><span>Beginning</span></BigButton>
              <BigButton $w={72}><IconCurrent /><span>From</span><span>Current Slide</span></BigButton>
              <Rule />
              <BigButton $w={60}><IconOnline /><span>Present</span><span>Online<Caret /></span></BigButton>
              <BigButton $w={70}><IconCustom /><span>Custom Slide</span><span>Show<Caret /></span></BigButton>
            </GroupBody>
            <GroupLabel>Start Slide Show</GroupLabel>
          </Group>
          <Group $w={406}>
            <GroupBody>
              <BigButton $w={71}><IconSetup /><span>Set Up</span><span>Slide Show</span></BigButton>
              <BigButton $w={40}><IconHide /><span>Hide</span><span>Slide</span></BigButton>
              <Rule />
              <BigButton $w={62}><IconRehearse /><span>Rehearse</span><span>Timings</span></BigButton>
              <BigButton $w={69}><IconRecord /><span>Record Slide</span><span>Show<Caret /></span></BigButton>
              <Checks>
                {["Play Narrations", "Use Timings", "Show Media Controls"].map((t) => (
                  <CheckLabel key={t}><CheckBox type="checkbox" defaultChecked />{t}</CheckLabel>
                ))}
              </Checks>
            </GroupBody>
            <GroupLabel>Set Up</GroupLabel>
          </Group>
          <Group $w={241}>
            <MonitorBox>
              <MonitorRow>
                <svg width="17" height="16" viewBox="0 0 17 16"><path fill="#fff" stroke="#8d9095" d="M5.500.5h11v8h-11z" /><path fill="#5d8fc4" d="M7 2h8v5H7z" /><path fill="#fff" stroke="#777" d="M.5 5.500h11v7H.5z" /><path fill="#3a87ad" d="M2 7h8v4H2z" /><path stroke="#777" d="M3 15h7M13 11h2" /></svg>
                Monitor:
                <SelectWrap>
                  <Select aria-label="Monitor"><option>Primary Monitor</option></Select>
                  <Caret />
                </SelectWrap>
              </MonitorRow>
              <CheckLabel><CheckBox type="checkbox" defaultChecked />Use Presenter View</CheckLabel>
            </MonitorBox>
            <GroupLabel>Monitors</GroupLabel>
          </Group>
          <CollapseRibbon aria-label="Collapse ribbon">
            <svg width="11" height="10" viewBox="0 0 11 10" fill="none" stroke="#858385" strokeWidth="2"><path d="M1.500 6l4-4 4 4" /></svg>
          </CollapseRibbon>
        </Ribbon>

        <Workspace>
          <Panel>
            <ThumbList>
              {thumbs.map((t) => (
                <ThumbItem key={t.n} $active={t.active}>
                  <ThumbMeta $off={t.off}>{t.n}<Star c="#777577" s={12} /></ThumbMeta>
                  <ThumbFrame $active={t.active}><FilmThumb id={t.n} kind={t.kind} muted={t.off} /></ThumbFrame>
                </ThumbItem>
              ))}
            </ThumbList>
            <Scroll $bottom={2}>
              <ArrowButton aria-label="Scroll slides up"><Up /></ArrowButton>
              <ScrollTrack><ScrollThumb $top={281} $h={142} /></ScrollTrack>
              <ArrowButton aria-label="Scroll slides down"><Down /></ArrowButton>
            </Scroll>
          </Panel>

          <Stage>
            <Slide>
              <TitleBand>
                <TitleBlock><TitlePlaceholder>Click to add title</TitlePlaceholder></TitleBlock>
                <Accent />
              </TitleBand>
              <Body>
                <Line><Tag $top={4}>1</Tag>Question 3: what are the rules for Method overriding ?</Line>
                {rules.map((r, i) => (
                  <Line key={r.n}>
                    <Tag $top={-5} $on={r.on}>{i + 2}</Tag>
                    <Num>{r.n}</Num>
                    {r.on ? <Chosen>{r.t}</Chosen> : r.t}
                  </Line>
                ))}
                {[[0, 0], [50, 0], [100, 0], [0, 50], [100, 50], [0, 100], [50, 100], [100, 100]].map(([x, y]) => (
                  <Handle key={`${x}-${y}`} $x={x} $y={y} />
                ))}
                <Rotate>
                  <svg width="28" height="42" viewBox="0 0 28 42" fill="none"><path stroke="#a9a29f" d="M12 22v18" /><path stroke="#999" strokeWidth="5" d="M19 15a8 8 0 1 1 1-6" /><path stroke="#f2f2f2" strokeWidth="3.500" d="M18 16a8 8 0 1 1 2-6" /><path fill="#f2f2f2" d="M12 9h14l-6 7z" /></svg>
                </Rotate>
                <TextCursor>
                  <svg width="9" height="18" viewBox="0 0 9 18" fill="none" stroke="#111"><path d="M1 1.500h2.500l1 1 1-1H8M4.500 2v14M1 16.500h2.500l1-1 1 1H8" /></svg>
                </TextCursor>
              </Body>
            </Slide>
          </Stage>

          <Scroll $bottom={26}>
            <ArrowButton aria-label="Scroll up"><Up /></ArrowButton>
            <ScrollTrack><ScrollThumb $top={359} $h={17} /></ScrollTrack>
            <ArrowButton aria-label="Scroll down"><Down /></ArrowButton>
            <JumpButton aria-label="Previous slide"><svg width="8" height="10" viewBox="0 0 8 10" fill="currentColor"><path d="M4 0l4 4H0zM4 4l4 4H0zM0 8.500h8V10H0z" /></svg></JumpButton>
            <JumpButton aria-label="Next slide"><svg width="8" height="10" viewBox="0 0 8 10" fill="currentColor"><path d="M0 0h8v1.500H0zM0 2h8L4 6zM0 6h8l-4 4z" /></svg></JumpButton>
          </Scroll>

          <Pane>
            <PaneHead>
              <PaneTitle>Animation P...</PaneTitle>
              <button aria-label="Pane options"><Down /></button>
              <button aria-label="Close pane"><svg width="20" height="18" viewBox="0 0 20 18" stroke="#706e70" strokeWidth="2"><path d="M5 3l9 9M14 3l-9 9" /></svg></button>
            </PaneHead>
            <PaneTools>
              <PlayFrom><Tri />Play From</PlayFrom>
              <ArrowButton $size={24} aria-label="Move earlier"><Up /></ArrowButton>
              <ArrowButton $size={24} aria-label="Move later"><Down /></ArrowButton>
            </PaneTools>
            <Effects>
              {effects.map(([t, w], i) => (
                <Effect key={t} $on={i === 3}>
                  {i + 1}<Star />
                  <EffectName>{t}</EffectName>
                  <Duration $w={w} />
                  {i === 3 && <Caret />}
                </Effect>
              ))}
            </Effects>
            <Timeline>
              <button>Seconds<Caret $gap={5} /></button>
              <Range>
                <Tri left s={7} />
                <Scale><ScaleNow>0</ScaleNow><span>'</span><span>2</span></Scale>
                <Tri s={7} />
              </Range>
            </Timeline>
          </Pane>
        </Workspace>

        <StatusBar>
          <span>Slide 21 of 27</span>
          <StatusButton $w={51} aria-label="Spelling">
            <svg width="16" height="14" viewBox="0 0 16 14" fill="none" stroke="#8b898b"><path d="M7.500 2v11M7.500 2C5 .5 3 .5 1 1v11c2-.5 4-.5 6.500 1M7.500 13H12M7.500 2C9 1 10 1 11 1" /><circle cx="12" cy="4" r="2.500" /><path d="M9 9l2-3M12 8l2 1" /></svg>
          </StatusButton>
          <span>English (United States)</span>
          <StatusEnd>
            <StatusButton $w={52}>
              <svg width="13" height="14" viewBox="0 0 13 14" stroke="#777" fill="#777"><path d="M0 7h13M0 10h13M0 13h8" /><path stroke="none" d="M6.500 0L10 4H3z" /></svg>Notes
            </StatusButton>
            <StatusButton $w={114}>
              <svg width="15" height="14" viewBox="0 0 15 14" fill="#6f6d6f"><path d="M0 0h15v10H7l-4 4v-4H0z" /></svg>Comments
            </StatusButton>
            <StatusButton $w={40} $on aria-label="Normal view"><svg width="15" height="14" viewBox="0 0 15 14" fill="none" stroke="#777"><path d="M.5.5h14v13H.5zM4 .5v13M4 10h10M7 3.500h5v3.500H7z" /></svg></StatusButton>
            <StatusButton $w={40} aria-label="Slide sorter"><svg width="15" height="15" viewBox="0 0 15 15" fill="none" stroke="#808080" strokeWidth="1.300"><path d="M1 1h5v4H1zM9 1h5v4H9zM1 9h5v4H1zM9 9h5v4H9z" /></svg></StatusButton>
            <StatusButton $w={40} aria-label="Reading view"><svg width="15" height="13" viewBox="0 0 15 13" fill="none" stroke="#808080"><path d="M7.500 1.500v11M7.500 1.500L.5.500v10.500l7 1.500 7-1.500V.5zM2 4h4M2 6.500h4M2 9h4M9 4h4M9 6.500h4M9 9h4" /></svg></StatusButton>
            <StatusButton $w={43} aria-label="Slide show"><svg width="14" height="14" viewBox="0 0 14 14" fill="none" stroke="#777"><path strokeWidth="1.500" d="M0 1h14" /><path d="M2 1v6h10V1M7 7v5M4 12.500h6" /></svg></StatusButton>
            <svg width="8" height="8" viewBox="0 0 8 8" stroke="#777" strokeWidth="2"><path d="M0 4h8" /></svg>
            <ZoomRange type="range" min="10" max="200" defaultValue="76" aria-label="Zoom" />
            <svg width="9" height="9" viewBox="0 0 9 9" stroke="#777" strokeWidth="2"><path d="M0 4.500h9M4.500 0v9" /></svg>
            <StatusButton $w={52}>72%</StatusButton>
            <svg width="15" height="14" viewBox="0 0 15 14" fill="none" stroke="#888"><path d="M.5.5h14v13H.5zM7.500 2v3M7.500 9v3M2 7h3M10 7h3M3 3l2 2M12 3l-2 2M3 11l2-2M12 11l-2-2" /></svg>
          </StatusEnd>
        </StatusBar>

        <TaskBar>
          <Start aria-label="Start"><svg width="17" height="17" viewBox="0 0 17 17" fill="#c9c9c9"><path d="M0 2.500L7.500 1.500v6.500H0zM8.500 1.300L17 0v8H8.500zM0 9h7.500v6.500L0 14.500zM8.500 9H17v8l-8.500-1.300z" /></svg></Start>
          <Search>
            <svg width="24" height="24" viewBox="0 0 24 24" fill="none" stroke="#b5b3b5" strokeWidth="3"><circle cx="12" cy="12" r="9.500" /></svg>
            <SearchInput placeholder="Type here to search" />
            <svg width="14" height="20" viewBox="0 0 14 20" fill="none" stroke="#8a888a" strokeWidth="1.300"><path d="M4.500 2h5v10h-5zM1.500 10c0 7 11 7 11 0M7 15v4" /></svg>
          </Search>
          {taskIcons.map((t) => (
            <Task key={t.name} aria-label={t.name} $open={t.open} $on={t.on}>
              <svg width="24" height="24" viewBox="0 0 24 24">{t.d}</svg>
            </Task>
          ))}
          <Tray>
            <TrayText $after={8}>Desktop</TrayText>
            <Chevrons>»</Chevrons>
            <TrayIcon $after={11}><svg width="13" height="8" viewBox="0 0 13 8" fill="none" stroke="#aaa" strokeWidth="1.500"><path d="M1 7l5.500-5.500L12 7" /></svg></TrayIcon>
            <TrayIcon $after={8}><svg width="17" height="10" viewBox="0 0 17 10" fill="none" stroke="#aaa" strokeWidth="1.300"><path d="M1 1h13v8H1zM15.500 3.500v3" /><path fill="#ccc" stroke="none" d="M3 3h5v4H3z" /></svg></TrayIcon>
            <TrayIcon $after={10}><svg width="18" height="14" viewBox="0 0 18 14" fill="none" stroke="#aaa" strokeWidth="1.300"><path d="M1 5h2l4-3.500v11L3 9H1zM9.500 5q1.500 2 0 4M12 3q3 4 0 8M14.500 1q4 6 0 12" /></svg></TrayIcon>
            <TrayText $after={8}>ENG</TrayText>
            <Clock>10:35 PM<br />8/21/2017</Clock>
            <Notices>
              <svg width="18" height="20" viewBox="0 0 18 20" fill="#c9c9c9"><path d="M0 0h18v15H9l-4 5v-5H0z" /><path stroke="#333" d="M3 4.500h12M3 7.500h12M3 10.500h8" /></svg>
              <NoticeCount />
            </Notices>
            <ShowDesktop />
          </Tray>
        </TaskBar>
      </Video>

      <Controls>
        <ControlSide $gap={34}>
          <button aria-label="Previous"><svg width="24" height="24" viewBox="0 0 24 24" fill="currentColor"><path d="M4 3h3v18H4zM22 3v18L9 12z" /></svg></button>
          <button aria-label="Play"><svg width="24" height="24" viewBox="0 0 24 24" fill="currentColor"><path d="M3 0l19 12L3 24z" /></svg></button>
          <button aria-label="Next"><svg width="24" height="24" viewBox="0 0 24 24" fill="currentColor"><path d="M17 3h3v18h-3zM2 3l13 9-13 9z" /></svg></button>
          <VolumeGroup>
            <button aria-label="Mute"><svg width="28" height="28" viewBox="0 0 28 28" fill="none"><path fill="currentColor" d="M0 9h6l8-8v26l-8-8H0z" /><path fill="currentColor" d="M16 8c5 1 5 11 0 12z" /><path stroke="currentColor" strokeWidth="3" d="M16 2.500c13 3 13 20 0 23" /></svg></button>
            <Time>11:40 / 11:50</Time>
          </VolumeGroup>
        </ControlSide>
        <button aria-label="More videos"><svg width="14" height="20" viewBox="0 0 14 20" fill="none" stroke="currentColor" strokeWidth="2.200"><path d="M1.500 4L7 9.500 12.500 4" /></svg></button>
        <ControlSide $end $gap={30}>
          <Settings aria-label="Settings">
            <svg width="25" height="25" viewBox="3 2 20 20" fill="currentColor"><path d="M19.400 13a7 7 0 0 0 0-2l2.100-1.600-2-3.500-2.500 1a7 7 0 0 0-1.700-1L15 3.200h-4l-.4 2.700a7 7 0 0 0-1.700 1l-2.500-1-2 3.500L6.500 11a7 7 0 0 0 0 2l-2.100 1.600 2 3.500 2.500-1a7 7 0 0 0 1.700 1l.4 2.700h4l.4-2.700a7 7 0 0 0 1.700-1l2.500 1 2-3.500zM13 15.500a3.500 3.500 0 1 1 0-7 3.500 3.500 0 0 1 0 7z" /></svg>
            <HdBadge>HD</HdBadge>
          </Settings>
          <button aria-label="Exit full screen"><svg width="26" height="26" viewBox="0 0 26 26" fill="none" stroke="currentColor" strokeWidth="3"><path d="M1 8.500h7.500V1M25 8.500h-7.500V1M1 17.500h7.500V25M25 17.500h-7.500V25" /></svg></button>
        </ControlSide>
      </Controls>

      <SeekBar type="range" min="0" max="710" defaultValue="700" aria-label="Seek" />

      <Toast>
        <ToastIcon>
          <svg width="25" height="17" viewBox="0 0 25 17"><defs><linearGradient id="cl"><stop offset="0" stopColor="#7fd2fa" /><stop offset=".55" stopColor="#1599f5" /><stop offset="1" stopColor="#2468f0" /></linearGradient></defs><path fill="url(#cl)" d="M5.500 16a5 5 0 0 1-.7-9.800 4 4 0 0 1 5-1.700 6.500 6.500 0 0 1 11 3.500A4.200 4.200 0 0 1 20 16z" /></svg>
        </ToastIcon>
        <ToastText>
          <ToastTitle>Update Apple ID Settings</ToastTitle>
          Some account services will not be<br />available until you sign in again.
        </ToastText>
        <ToastAction>View</ToastAction>
      </Toast>
    </Player>
  );
}
